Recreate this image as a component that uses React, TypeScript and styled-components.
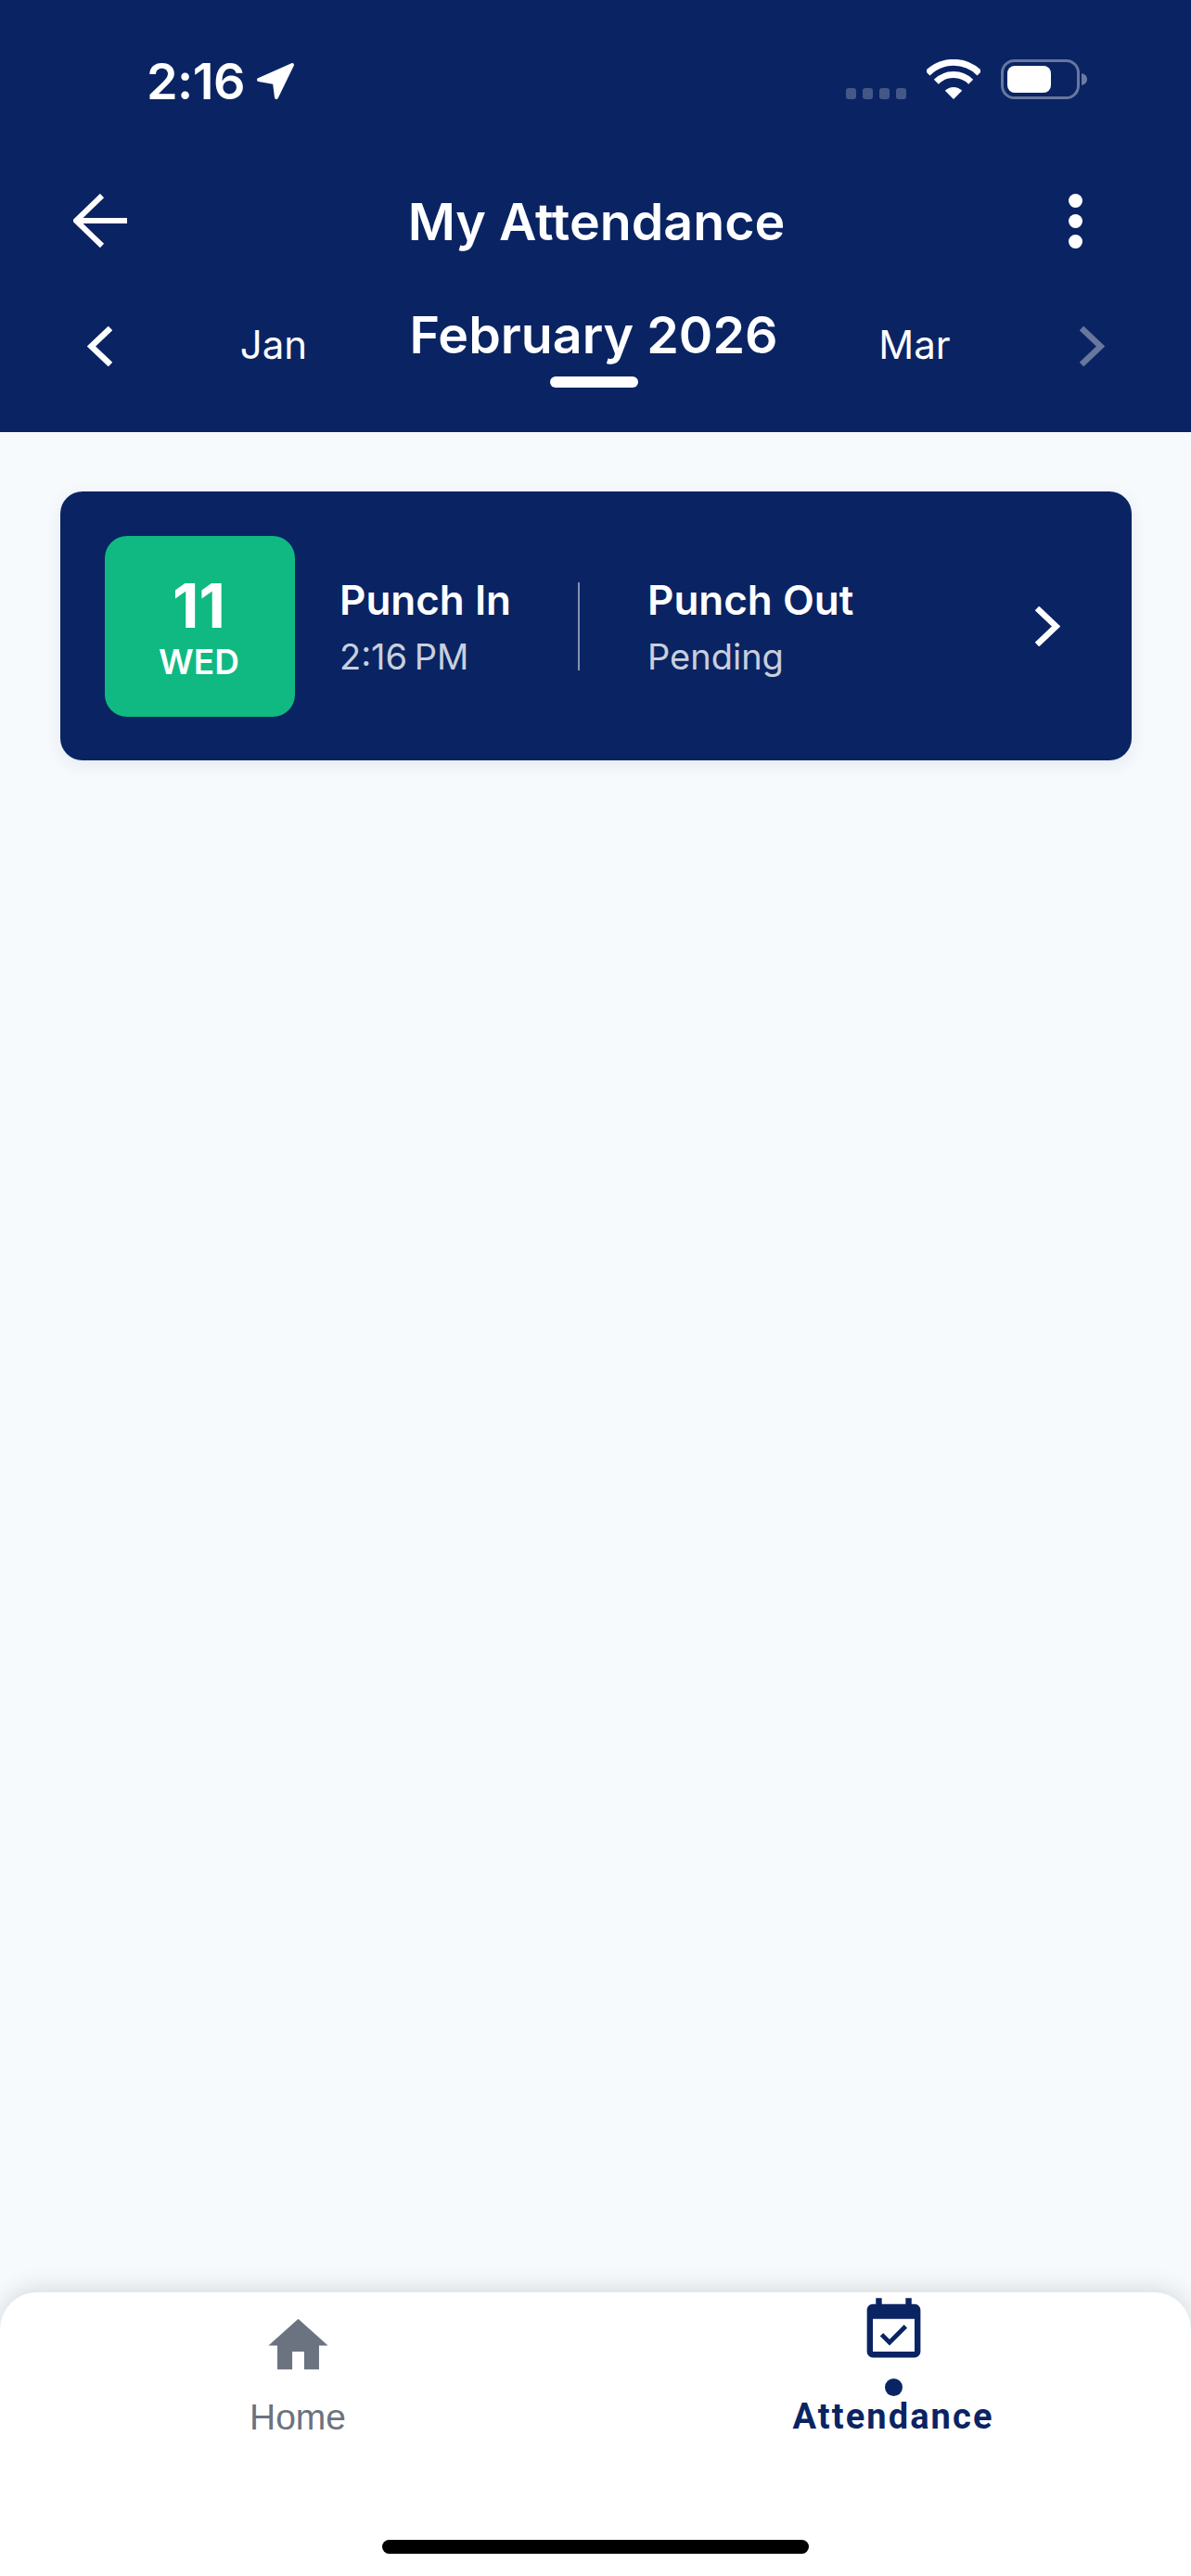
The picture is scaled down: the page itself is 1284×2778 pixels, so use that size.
import React from "react";
import styled, { createGlobalStyle } from "styled-components";

const NAVY = "#0A2463";

const Global = createGlobalStyle`
  html, body { margin: 0; padding: 0; background: #F6FAFD; }
  * { box-sizing: border-box; }
`;

const Screen = styled.div`
  width: 1284px;
  height: 2778px;
  display: flex;
  flex-direction: column;
  overflow: hidden;
  background: #f6fafd;
  font-family: Inter, "Liberation Sans", sans-serif;
`;

const Header = styled.header`
  background: ${NAVY};
  height: 466px;
  flex: none;
  padding-top: 64px;
  color: #fff;
`;

const StatusBar = styled.div`
  display: flex;
  justify-content: space-between;
  align-items: flex-start;
  padding: 0 112px 0 158px;
`;

const StatusLeft = styled.div`
  display: flex;
  align-items: center;
  gap: 12px;
`;

const Clock = styled.span`
  font-size: 54px;
  font-weight: 600;
  line-height: 47px;
  letter-spacing: -0.6px;
`;

const StatusRight = styled.div`
  display: flex;
  align-items: flex-start;
  gap: 22px;
`;

const SignalDots = styled.div`
  display: flex;
  gap: 7px;
  padding-top: 31px;
`;

const SignalDot = styled.span`
  width: 11px;
  height: 12px;
  border-radius: 3px;
  background: rgba(255, 255, 255, 0.24);
`;

const TitleRow = styled.div`
  margin-top: 87px;
  height: 80px;
  display: flex;
  align-items: center;
  justify-content: space-between;
  padding: 0 117px 0 79px;
`;

const Title = styled.h1`
  margin: 0;
  padding: 2px 3px 0 0;
  font-size: 55.5px;
  font-weight: 600;
  line-height: 78px;
`;

const Kebab = styled.div`
  display: flex;
  flex-direction: column;
  gap: 7px;
`;

const KebabDot = styled.span`
  width: 15px;
  height: 15px;
  border-radius: 50%;
  background: #fff;
`;

const MonthRow = styled.div`
  margin-top: 50px;
  padding: 0 80px;
  display: grid;
  grid-template-columns: 54px 322px minmax(0, 1fr) 322px 54px;
  align-items: center;
`;

const ChevronCell = styled.div<{ $dim?: boolean }>`
  display: flex;
  justify-content: center;
  opacity: ${(p) => (p.$dim ? 0.38 : 1)};
`;

const SideMonth = styled.div<{ $nudge?: number }>`
  text-align: center;
  font-size: 42px;
  font-weight: 400;
  line-height: 60px;
  padding: 0 ${(p) => p.$nudge ?? 0}px 3px 0;
`;

const CurrentMonth = styled.div`
  display: flex;
  flex-direction: column;
  align-items: center;
  gap: 13px;
  min-width: 0;
  padding-right: 4px;
`;

const CurrentLabel = styled.div`
  font-size: 55.5px;
  font-weight: 600;
  line-height: 65px;
  white-space: nowrap;
`;

const Underline = styled.span`
  width: 95px;
  height: 12px;
  border-radius: 6px;
  background: #fff;
`;

const Body = styled.main`
  flex: 1;
  padding: 64px 64px 0 65px;
`;

const Card = styled.section`
  height: 290px;
  background: ${NAVY};
  border-radius: 24px;
  box-shadow: 0 5px 18px rgba(10, 36, 99, 0.08);
  padding: 48px;
  display: flex;
  align-items: flex-start;
  color: #fff;
`;

const DateTile = styled.div`
  width: 205px;
  height: 195px;
  flex: none;
  border-radius: 24px;
  background: #10b981;
  display: flex;
  flex-direction: column;
  align-items: center;
  justify-content: center;
  padding: 5px 2px 0 0;
  margin-right: 48px;
`;

const DayNumber = styled.div`
  font-size: 66px;
  font-weight: 700;
  line-height: 66px;
`;

const DayName = styled.div`
  margin-top: 6px;
  font-size: 37px;
  font-weight: 600;
  line-height: 44px;
`;

const PunchCol = styled.div<{ $width?: number }>`
  display: flex;
  flex-direction: column;
  flex: ${(p) => (p.$width ? `0 0 ${p.$width}px` : "1")};
  align-self: center;
  padding-top: 3px;
`;

const PunchLabel = styled.div`
  font-size: 44px;
  font-weight: 600;
  line-height: 58px;
`;

const PunchValue = styled.div`
  margin-top: 6px;
  font-size: 38px;
  font-weight: 400;
  line-height: 53px;
  word-spacing: -3px;
  color: rgba(255, 255, 255, 0.8);
`;

const Divider = styled.div`
  flex: none;
  align-self: center;
  width: 2px;
  height: 95px;
  margin: 0 73px 0 0;
  background: rgba(255, 255, 255, 0.5);
`;

const CardChevron = styled.div`
  align-self: center;
  flex: none;
  display: flex;
  margin-right: 29px;
`;

const TabBar = styled.nav`
  flex: none;
  height: 306px;
  background: #fff;
  border-radius: 40px 40px 0 0;
  box-shadow: 0 -4px 26px rgba(0, 0, 0, 0.13);
  display: flex;
  flex-direction: column;
`;

const Tabs = styled.div`
  height: 156px;
  display: grid;
  grid-template-columns: 1fr 1fr;
  grid-template-rows: 156px;
`;

const Tab = styled.div`
  display: flex;
  flex-direction: column;
  align-items: center;
  justify-content: flex-end;
`;

const TabIcon = styled.svg<{ $gap?: number }>`
  width: 77px;
  height: 77px;
  display: block;
  margin-bottom: ${(p) => p.$gap ?? 0}px;
`;

const ActiveDot = styled.span`
  width: 19px;
  height: 19px;
  margin-top: 13px;
  border-radius: 50%;
  background: ${NAVY};
`;

const TabLabel = styled.span<{ $active?: boolean }>`
  font-family: ${(p) => (p.$active ? 'Roboto, "Liberation Sans", sans-serif' : '"Liberation Sans", Arial, sans-serif')};
  font-size: ${(p) => (p.$active ? 38 : 39)}px;
  font-weight: ${(p) => (p.$active ? 700 : 400)};
  letter-spacing: ${(p) => (p.$active ? "2.1px" : "0")};
  line-height: 44px;
  margin-bottom: ${(p) => (p.$active ? 0 : -1)}px;
  color: ${(p) => (p.$active ? NAVY : "#6B7280")};
`;

const HomeIndicator = styled.div`
  align-self: center;
  width: 460px;
  height: 15px;
  margin-top: 111px;
  border-radius: 8px;
  background: #000;
`;

const LocationArrow = () => (
  <svg width="42" height="41" viewBox="0 0 42 41">
    <path d="M3 19 L39 3 L22 38 L20 22 Z" fill="#fff" stroke="#fff" strokeWidth="4" strokeLinejoin="round" />
  </svg>
);

const Wifi = () => (
  <svg width="58" height="43" viewBox="0 0 58 43" fill="none">
    <path d="M1 15 A39.5 39.5 0 0 1 57 15" stroke="#fff" strokeWidth="7" />
    <path d="M10.3 24.3 A26.5 26.5 0 0 1 47.7 24.3" stroke="#fff" strokeWidth="7" />
    <path d="M29 43 L19.8 33.8 A13 13 0 0 1 38.2 33.8 Z" fill="#fff" />
  </svg>
);

const Battery = () => (
  <svg width="93" height="43" viewBox="0 0 93 43" fill="none">
    <rect x="1.5" y="1.5" width="82" height="40" rx="13" stroke="#fff" strokeOpacity="0.38" strokeWidth="3" />
    <rect x="7" y="7" width="47" height="29" rx="8" fill="#fff" />
    <path d="M87 15 C91 16 93 18 93 21.5 C93 25 91 27 87 28 Z" fill="#fff" fillOpacity="0.4" />
  </svg>
);

const BackArrow = () => (
  <svg width="58" height="58" viewBox="0 0 58 58" fill="none" stroke="#fff" strokeWidth="6">
    <path d="M31 2 L3 29 L31 56" />
    <path d="M4 29 H58" />
  </svg>
);

const Chevron = ({ dir }: { dir: "left" | "right" }) => (
  <svg width="27" height="43" viewBox="0 0 27 43" fill="none" stroke="#fff" strokeWidth="6.5">
    <path d={dir === "left" ? "M25 2 L4.5 21.5 L25 41" : "M2 2 L22.5 21.5 L2 41"} />
  </svg>
);

export default function App() {
  return (
    <Screen>
      <Global />
      <Header>
        <StatusBar>
          <StatusLeft>
            <Clock>2:16</Clock>
            <LocationArrow />
          </StatusLeft>
          <StatusRight>
            <SignalDots>
              {[0, 1, 2, 3].map((i) => (
                <SignalDot key={i} />
              ))}
            </SignalDots>
            <Wifi />
            <Battery />
          </StatusRight>
        </StatusBar>
        <TitleRow>
          <BackArrow />
          <Title>My Attendance</Title>
          <Kebab>
            <KebabDot />
            <KebabDot />
            <KebabDot />
          </Kebab>
        </TitleRow>
        <MonthRow>
          <ChevronCell>
            <Chevron dir="left" />
          </ChevronCell>
          <SideMonth>Jan</SideMonth>
          <CurrentMonth>
            <CurrentLabel>February 2026</CurrentLabel>
            <Underline />
          </CurrentMonth>
          <SideMonth $nudge={6}>Mar</SideMonth>
          <ChevronCell $dim>
            <Chevron dir="right" />
          </ChevronCell>
        </MonthRow>
      </Header>
      <Body>
        <Card>
          <DateTile>
            <DayNumber>11</DayNumber>
            <DayName>WED</DayName>
          </DateTile>
          <PunchCol $width={257}>
            <PunchLabel>Punch In</PunchLabel>
            <PunchValue>2:16 PM</PunchValue>
          </PunchCol>
          <Divider />
          <PunchCol>
            <PunchLabel>Punch Out</PunchLabel>
            <PunchValue>Pending</PunchValue>
          </PunchCol>
          <CardChevron>
            <Chevron dir="right" />
          </CardChevron>
        </Card>
      </Body>
      <TabBar>
        <Tabs>
          <Tab>
            <TabIcon viewBox="0 0 24 24" fill="#6B7280" $gap={17}>
              <path d="M10 20v-6h4v6h5v-8h3L12 3 2 12h3v8z" />
            </TabIcon>
            <TabLabel>Home</TabLabel>
          </Tab>
          <Tab>
            <TabIcon viewBox="0 0 24 24" fill={NAVY}>
              <path d="M16.53 11.06L15.47 10l-4.88 4.88-2.12-2.12-1.06 1.06L10.59 17l5.94-5.94zM19 3h-1V1h-2v2H8V1H6v2H5c-1.11 0-1.99.9-1.99 2L3 19c0 1.1.89 2 2 2h14c1.1 0 2-.9 2-2V5c0-1.1-.9-2-2-2zm0 16H5V8h14v11z" />
            </TabIcon>
            <ActiveDot />
            <TabLabel $active>Attendance</TabLabel>
          </Tab>
        </Tabs>
        <HomeIndicator />
      </TabBar>
    </Screen>
  );
}
